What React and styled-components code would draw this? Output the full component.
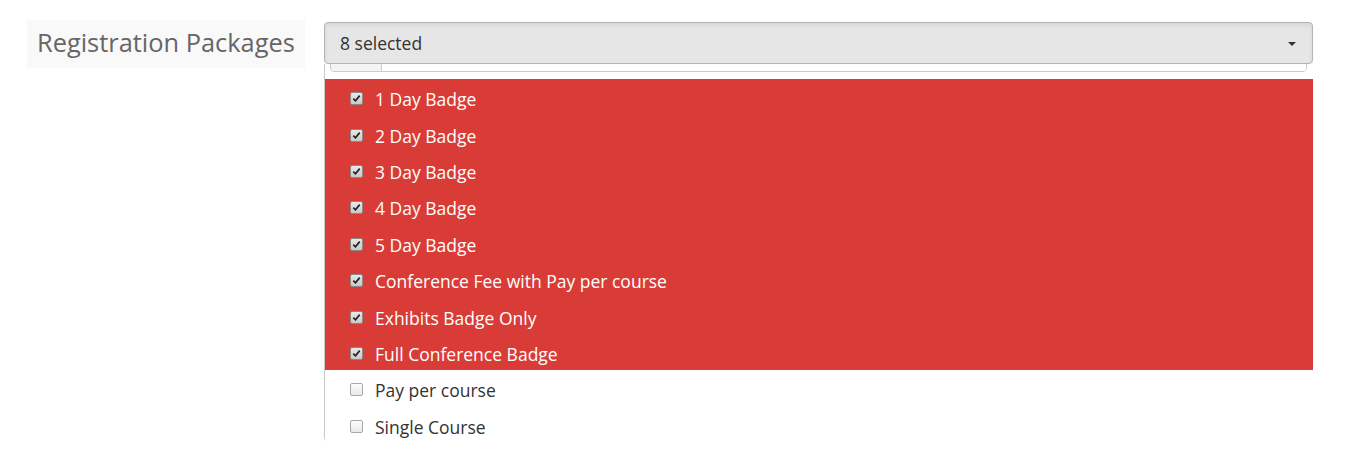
import React, { useLayoutEffect, useRef } from "react";
import styled, { createGlobalStyle } from "styled-components";

const Global = createGlobalStyle`
  html, body { margin: 0; padding: 0; background: #fff; }
  body { font-family: "Open Sans", "Liberation Sans", sans-serif; }
`;

const Page = styled.div`
  display: flex;
  align-items: flex-start;
  padding: 20px 0 0 27px;
  height: 456px;
  box-sizing: border-box;
  overflow: hidden;
`;

const Label = styled.div`
  width: 278px;
  height: 48px;
  box-sizing: border-box;
  background: #f9f9f9;
  color: #666;
  font-size: 25.4px;
  line-height: 44px;
  padding-left: 10px;
  margin-right: 19px;
  white-space: nowrap;
`;

const Select = styled.div`
  position: relative;
  width: 989px;
  margin-top: 2px;
`;

const Button = styled.button`
  display: flex;
  align-items: center;
  justify-content: space-between;
  width: 100%;
  height: 42px;
  box-sizing: border-box;
  padding: 0 15px 0 15px;
  background: #e6e6e6;
  border: 1px solid #b5b5b5;
  border-radius: 4px;
  box-shadow: inset 0 2px 4px rgba(0, 0, 0, 0.08);
  font-family: "Open Sans", "Liberation Sans", sans-serif;
  font-size: 17.5px;
  color: #333;
  cursor: pointer;
`;

const Caret = styled.span`
  width: 0;
  height: 0;
  border-left: 4px solid transparent;
  border-right: 4px solid transparent;
  border-top: 4px solid #333;
  margin-right: 1px;
  margin-top: 2px;
`;

const Menu = styled.div`
  position: absolute;
  top: 42px;
  left: 0;
  right: 0;
  height: 377px;
  overflow: hidden;
  background: #fff;
  border-left: 1px solid #c8c8c8;
  border-radius: 0 0 4px 4px;
  box-sizing: border-box;
`;

const SearchGroup = styled.div`
  display: flex;
  height: 34px;
  margin: 5px 6px 7px 5px;
  border: 1px solid #ccc;
  border-radius: 4px;
  box-sizing: border-box;
  overflow: hidden;
`;

const Addon = styled.span`
  width: 50px;
  background: #f4f4f4;
  border-right: 1px solid #ccc;
`;

const SearchInput = styled.span`
  flex: 1;
  background: #fff;
`;

const List = styled.ul`
  list-style: none;
  margin: 0;
  padding: 0;
`;

const Item = styled.li`
  display: flex;
  align-items: center;
  height: 36.4px;
  box-sizing: border-box;
  padding: 4px 0 0 25px;
  background: ${(p) => (p.$active ? "#d93c36" : "#fff")};
  color: ${(p) => (p.$active ? "#fff" : "#333")};
  font-size: 17.5px;
`;

const Box = styled.span`
  display: inline-flex;
  align-items: center;
  justify-content: center;
  width: 11px;
  height: 11px;
  margin-right: 12px;
  margin-top: -1px;
  border-radius: 2px;
  border: 1px solid ${(p) => (p.$checked ? "#8a8a8a" : "#a8a8a8")};
  background: ${(p) =>
    p.$checked
      ? "linear-gradient(#e8e8e8, #c9c9c9)"
      : "linear-gradient(#fdfdfd, #e9e9e9)"};
`;

const items = [
  ["1 Day Badge", true],
  ["2 Day Badge", true],
  ["3 Day Badge", true],
  ["4 Day Badge", true],
  ["5 Day Badge", true],
  ["Conference Fee with Pay per course", true],
  ["Exhibits Badge Only", true],
  ["Full Conference Badge", true],
  ["Pay per course", false],
  ["Single Course", false],
];

function Check({ checked }) {
  return (
    <Box $checked={checked}>
      {checked && (
        <svg width="9" height="9" viewBox="0 0 9 9">
          <path d="M1.3 4.6 L3.5 6.8 L7.7 1.6" fill="none" stroke="#222" strokeWidth="1.7" />
        </svg>
      )}
    </Box>
  );
}

export default function App() {
  const menuRef = useRef(null);
  useLayoutEffect(() => {
    if (menuRef.current) menuRef.current.scrollTop = 31;
  }, []);
  return (
    <>
      <Global />
      <Page>
        <Label>Registration Packages</Label>
        <Select>
          <Button type="button">
            <span>8 selected</span>
            <Caret />
          </Button>
          <Menu ref={menuRef}>
            <SearchGroup>
              <Addon />
              <SearchInput />
            </SearchGroup>
            <List>
              {items.map(([t, c]) => (
                <Item key={t} $active={c}>
                  <Check checked={c} />
                  {t}
                </Item>
              ))}
            </List>
          </Menu>
        </Select>
      </Page>
    </>
  );
}
